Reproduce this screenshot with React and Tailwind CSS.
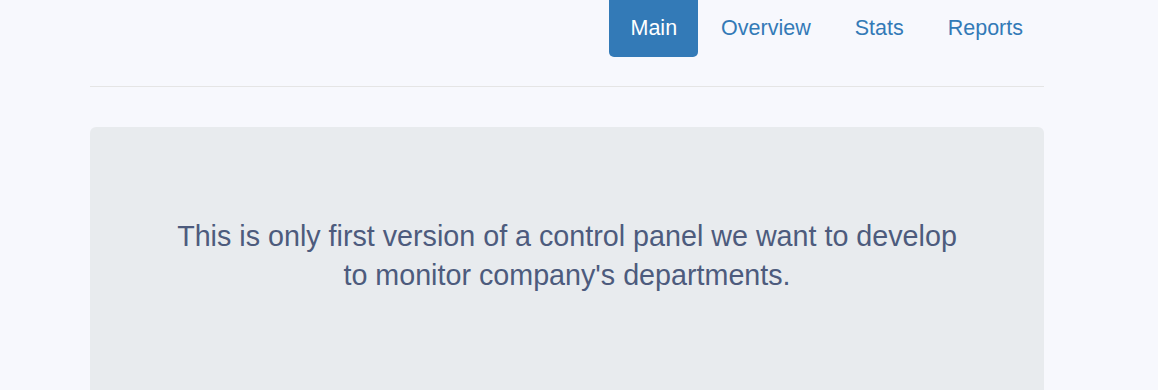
export default function App() {
  const links = ["Main", "Overview", "Stats", "Reports"]

  return (
    <div className="min-h-[390px] bg-[#f7f8fd] font-['Liberation_Sans',Arial,sans-serif]">
      <div className="ml-[90px] w-[954px]">
        {/* Header nav */}
        <div className="flex justify-end h-[87px] border-b border-[#e5e5e5]">
          <ul className="flex items-start gap-[2px]">
            {links.map((link, i) => (
              <li key={link}>
                <a
                  href="#"
                  className={`flex items-center h-[57px] px-[21px] text-[21.5px] leading-none rounded-b-[5px] ${
                    i === 0 ? "bg-[#337ab7] text-white" : "text-[#337ab7]"
                  }`}
                >
                  {link}
                </a>
              </li>
            ))}
          </ul>
        </div>

        {/* Jumbotron */}
        <div className="mt-[40px] h-[280px] rounded-[6px] bg-[#e8ebee] px-[75px] pt-[90px]">
          <p className="text-center text-[28.7px] leading-[39px] text-[#4d5b7d]">
            This is only first version of a control panel we want to develop to monitor company's departments.
          </p>
        </div>
      </div>
    </div>
  )
}
